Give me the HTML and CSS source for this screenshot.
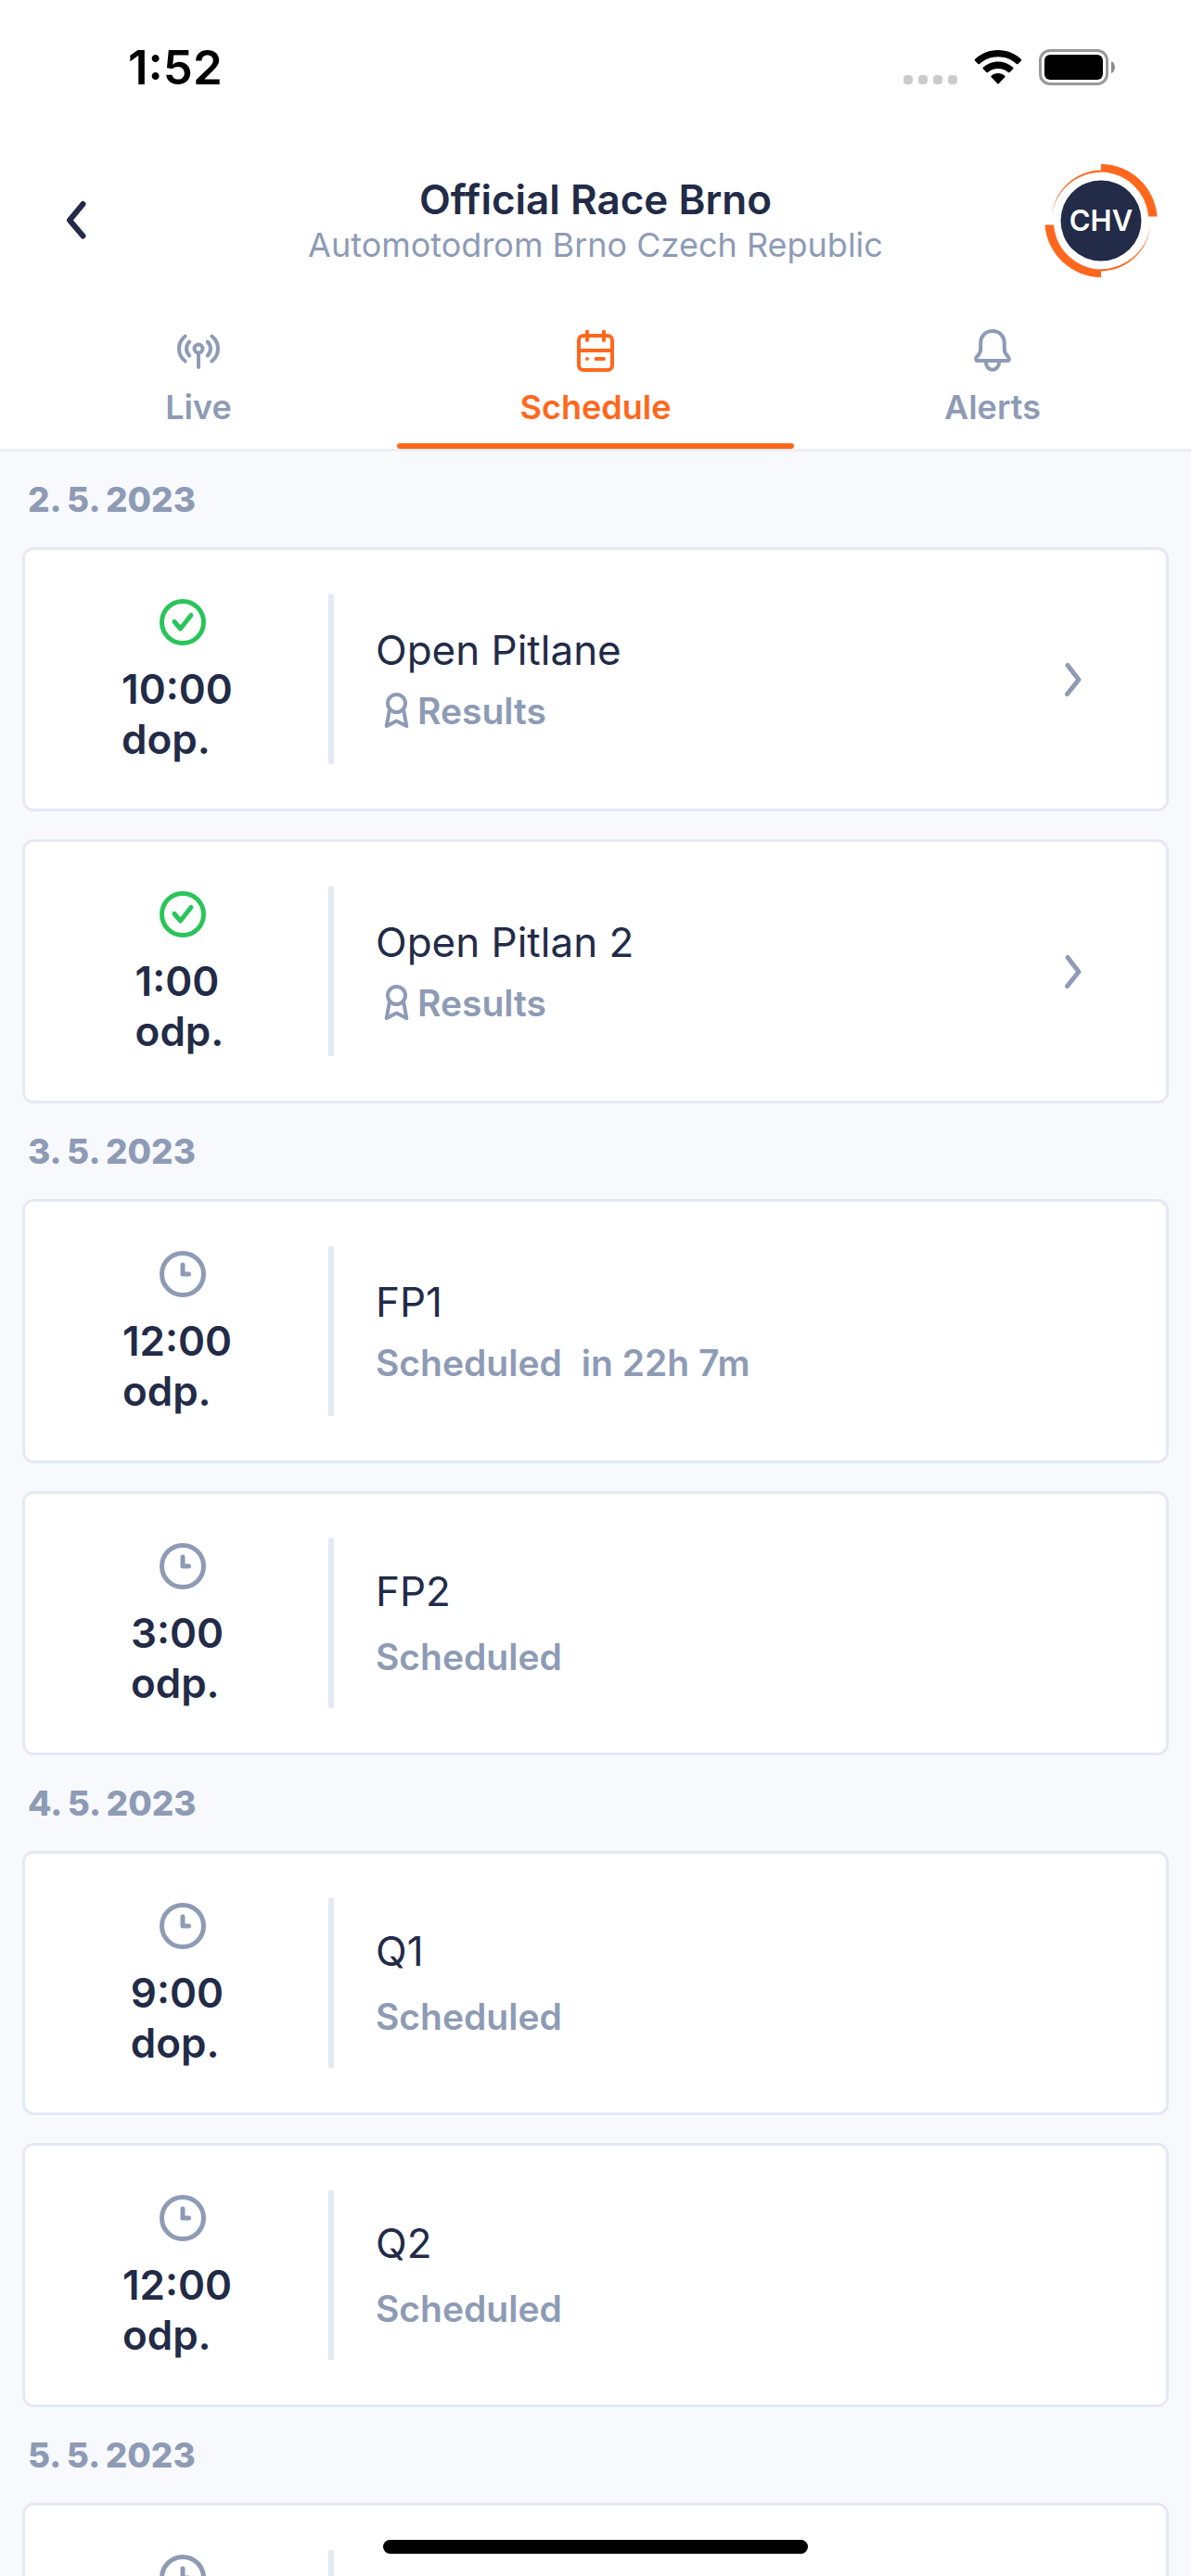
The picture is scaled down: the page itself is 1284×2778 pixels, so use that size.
FILE: index.html
```html
<!DOCTYPE html>
<html lang="en">
<head>
  <meta charset="utf-8">
  <meta name="viewport" content="width=device-width, initial-scale=1">
  <title>Official Race Brno</title>
  <link rel="stylesheet" href="styles.css">
</head>
<body>
  <svg class="sprite" aria-hidden="true">
    <symbol id="i-check" viewBox="0 0 60 60">
      <circle cx="30" cy="30" r="22.5"/>
      <path d="M21 29.5 27.5 37 39 22.5"/>
    </symbol>
    <symbol id="i-clock" viewBox="0 0 60 60">
      <circle cx="30" cy="30" r="22.5"/>
      <path d="M30 20V30H36.5"/>
    </symbol>
    <symbol id="i-award" viewBox="0 0 45 48">
      <circle cx="22.5" cy="15.5" r="9.5"/>
      <path d="M15 22 11.7 40 22.5 34.5 33.3 40 30 22"/>
    </symbol>
    <symbol id="i-next" viewBox="0 0 36 48">
      <path d="M12 8.500 24 24 11.500 39.500"/>
    </symbol>
  </svg>

  <div class="app">
    <div class="status">
      <time class="status-time">1:52</time>
      <div class="status-icons">
        <svg width="58" height="40" viewBox="0 0 58 40" fill="#cbcbcb" aria-hidden="true">
          <rect x="0" y="29" width="10" height="10" rx="4"/><rect x="16" y="29" width="10" height="10" rx="4"/><rect x="32" y="29" width="10" height="10" rx="4"/><rect x="48" y="29" width="10" height="10" rx="4"/>
        </svg>
        <svg width="52" height="40" viewBox="0 0 52 40" fill="#000" aria-hidden="true">
          <path d="M26 2C36 2 45 6 51 12Q51.500 12.700 51 13.400L47.500 17Q46.800 17.500 46 17C40.500 12 33.500 9.300 26 9.300S11.500 12 6 17Q5.200 17.500 4.500 17L1 13.400Q.5 12.700 1 12C7 6 16 2 26 2Z"/>
          <path d="M26 14.500C32.500 14.500 38 17 42.200 20.800Q42.800 21.500 42.200 22.200L38.500 26Q37.700 26.600 37 26C34 23.400 30.200 21.900 26 21.900S18 23.400 15 26Q14.300 26.600 13.500 26L9.800 22.200Q9.200 21.500 9.800 20.800C14 17 19.500 14.500 26 14.500Z"/>
          <path d="M26 27C28.800 27 31.300 28 33.300 29.800Q34 30.500 33.300 31.300L26.700 38.200Q26 38.900 25.300 38.200L18.700 31.300Q18 30.500 18.700 29.800C20.700 28 23.200 27 26 27Z"/>
        </svg>
        <svg width="83" height="40" viewBox="0 0 83 40" aria-hidden="true">
          <rect x="1.500" y="2.500" width="72" height="36" rx="10.500" fill="none" stroke="#999" stroke-width="3"/>
          <rect x="6" y="7" width="63" height="27" rx="6" fill="#000"/>
          <path d="M78 14C83.300 16 83.300 25 78 27Z" fill="#8c8c8c"/>
        </svg>
      </div>
    </div>

    <header class="header">
      <button class="back" type="button" aria-label="Back">
        <svg width="36" height="54" viewBox="0 0 36 54"><path d="M25.500 9 11 26.500 25.500 43.500"/></svg>
      </button>
      <div class="heading">
        <h1>Official Race Brno</h1>
        <p>Automotodrom Brno Czech Republic</p>
      </div>
      <svg class="logo" width="122" height="122" viewBox="-61 -61 122 122" role="img" aria-label="CHV">
        <g id="swoosh" fill="#ff671d">
          <path d="M0-61A61 61 0 0 1 60.600-4.500H51A52 52 0 0 0 0-52.500Z"/>
          <path d="M0-54.500A54 54 0 0 0-53.200-4.500A54 53 0 0 1 0-52.200Z"/>
        </g>
        <use href="#swoosh" transform="rotate(180)"/>
        <circle r="43.500" fill="#222b47"/>
        <text class="logo-text" x="0" y="11" text-anchor="middle">CHV</text>
      </svg>
    </header>

    <nav class="tabs">
      <a class="tab" href="#live">
        <svg class="tab-icon" viewBox="0 0 54 54"><circle cx="27" cy="25" r="4.500"/><path d="M27 30V45M12.700 11.500A17 17 0 0 0 12.700 38.500M17.200 17.500A10.500 10.500 0 0 0 17.200 32.500M41.300 11.500A17 17 0 0 1 41.300 38.500M36.800 17.500A10.500 10.500 0 0 1 36.800 32.500"/></svg>
        <span>Live</span>
      </a>
      <a class="tab tab-active" href="#schedule" aria-current="page">
        <svg class="tab-icon" viewBox="0 0 54 54"><rect x="9" y="11" width="36" height="37" rx="5"/><path d="M9 27H45M18 6.500V16M36 6.500V16M18 36V36.010M27.500 36H36"/></svg>
        <span>Schedule</span>
      </a>
      <a class="tab" href="#alerts">
        <svg class="tab-icon" viewBox="0 0 54 54"><path d="M27 6C19 6 14.200 12 14.200 19V26C14.200 29 13 30.800 10.500 33.200C8 36 9 38 11 38H43C45 38 46 36 43.500 33.200C41 30.800 39.800 29 39.800 26V19C39.800 12 35 6 27 6ZM19.800 39C19.800 44 23 47.800 27 47.800S34.200 44 34.200 39"/></svg>
        <span>Alerts</span>
      </a>
    </nav>

    <main class="list">
      <section>
        <h2>2.&#8201;5.&#8201;2023</h2>
        <a class="card" href="#open-pitlane">
          <div class="when"><svg class="state done"><use href="#i-check"/></svg><p class="time">10:00&nbsp;<br>dop.</p></div>
          <div class="what"><h3>Open Pitlane</h3><p class="note"><svg class="award"><use href="#i-award"/></svg>Results</p></div>
          <svg class="next"><use href="#i-next"/></svg>
        </a>
        <a class="card" href="#open-pitlan-2">
          <div class="when"><svg class="state done"><use href="#i-check"/></svg><p class="time">1:00&nbsp;<br>odp.</p></div>
          <div class="what"><h3>Open Pitlan 2</h3><p class="note"><svg class="award"><use href="#i-award"/></svg>Results</p></div>
          <svg class="next"><use href="#i-next"/></svg>
        </a>
      </section>
      <section>
        <h2>3.&#8201;5.&#8201;2023</h2>
        <article class="card">
          <div class="when"><svg class="state"><use href="#i-clock"/></svg><p class="time">12:00&nbsp;<br>odp.</p></div>
          <div class="what"><h3>FP1</h3><p class="note">Scheduled<span class="countdown">in 22h 7m</span></p></div>
        </article>
        <article class="card">
          <div class="when"><svg class="state"><use href="#i-clock"/></svg><p class="time">3:00&nbsp;<br>odp.</p></div>
          <div class="what what-plain"><h3>FP2</h3><p class="note">Scheduled</p></div>
        </article>
      </section>
      <section>
        <h2>4.&#8201;5.&#8201;2023</h2>
        <article class="card">
          <div class="when"><svg class="state"><use href="#i-clock"/></svg><p class="time">9:00&nbsp;<br>dop.</p></div>
          <div class="what what-plain"><h3>Q1</h3><p class="note">Scheduled</p></div>
        </article>
        <article class="card">
          <div class="when"><svg class="state"><use href="#i-clock"/></svg><p class="time">12:00&nbsp;<br>odp.</p></div>
          <div class="what what-plain"><h3>Q2</h3><p class="note">Scheduled</p></div>
        </article>
      </section>
      <section>
        <h2>5.&#8201;5.&#8201;2023</h2>
        <article class="card">
          <div class="when"><svg class="state"><use href="#i-clock"/></svg></div>
        </article>
      </section>
    </main>
    <div class="home-bar"></div>
  </div>
</body>
</html>
```
FILE: styles.css
```css
:root {
  --navy: #222b47;
  --muted: #8e9bb5;
  --orange: #ff671d;
  --green: #2ac55a;
  --line: #e4e9f3;
  --page: #f8f9fd;
}

* {
  box-sizing: border-box;
  margin: 0;
  padding: 0;
}

body {
  font-family: Inter, "Liberation Sans", sans-serif;
  color: var(--navy);
  background: #fff;
}

a {
  color: inherit;
  text-decoration: none;
}

svg {
  display: block;
  flex: none;
}

.sprite {
  position: absolute;
  width: 0;
  height: 0;
}

.app {
  display: flex;
  flex-direction: column;
  height: 100vh;
}

/* Status bar */
.status {
  display: flex;
  justify-content: space-between;
  align-items: center;
  height: 144px;
  padding: 0 81px 0 138px;
  color: #000;
}

.status-time {
  padding-top: 2px;
  font-size: 51px;
  font-weight: 600;
  line-height: 60px;
}

.status-icons {
  display: flex;
  gap: 18px;
}

/* Header */
.header {
  display: grid;
  grid-template-columns: 122px 1fr 122px;
  align-items: center;
  padding: 33px 36px 0 64px;
}

.back {
  width: 36px;
  border: 0;
  background: none;
}

.back path,
.tab-icon,
.state,
.award,
.next {
  fill: none;
  stroke: currentColor;
  stroke-linecap: round;
  stroke-linejoin: round;
}

.back path {
  stroke: var(--navy);
  stroke-width: 6;
}

.heading {
  margin-right: 28px;
  padding-bottom: 2px;
  text-align: center;
  white-space: nowrap;
}

.logo {
  justify-self: end;
}

h1 {
  font-size: 44px;
  font-weight: 600;
  line-height: 54px;
}

.heading p {
  font-size: 36px;
  line-height: 44px;
  color: var(--muted);
}

.logo-text {
  fill: #fff;
  font-size: 31px;
  font-weight: 600;
}

/* Tabs */
.tabs {
  display: grid;
  grid-template-columns: repeat(3, 1fr);
  border-bottom: 3px solid #eceff7;
}

.tab {
  display: flex;
  flex-direction: column;
  align-items: center;
  padding-top: 52px;
  font-size: 36px;
  font-weight: 600;
  line-height: 44px;
  color: var(--muted);
}

.tab-icon {
  width: 54px;
  height: 54px;
  margin-bottom: 12px;
  stroke-width: 4;
}

.tab::after {
  content: "";
  align-self: stretch;
  height: 6px;
  margin-top: 17px;
  border-radius: 3px;
}

.tab-active {
  color: var(--orange);
}

.tab-active::after {
  background: var(--orange);
}

/* Schedule */
.list {
  flex: 1;
  min-height: 0;
  padding: 0 24px;
  overflow-y: auto;
  scrollbar-width: none;
  background: var(--page);
}

h2 {
  padding: 30px 6px 29px;
  font-size: 37px;
  font-weight: 800;
  line-height: 44px;
  color: var(--muted);
}

.card {
  display: flex;
  align-items: center;
  min-height: 285px;
  padding: 48px 82px 48px 12px;
  border: 3px solid var(--line);
  border-radius: 12px;
  background: #fff;
}

.card + .card {
  margin-top: 30px;
}

.when {
  display: flex;
  flex-direction: column;
  align-items: center;
  gap: 15px;
  width: 321px;
  min-height: 183px;
  border-right: 6px solid var(--line);
}

.state {
  width: 60px;
  height: 60px;
  color: var(--muted);
  stroke-width: 5;
}

.done {
  color: var(--green);
}

.time {
  font-size: 44px;
  font-weight: 600;
  line-height: 54px;
}

.what {
  display: flex;
  flex: 1;
  flex-direction: column;
  gap: 15px;
  padding-left: 45px;
}

.what-plain {
  gap: 20px;
  padding-bottom: 2px;
}

h3 {
  font-size: 44px;
  font-weight: 400;
  line-height: 54px;
}

.note {
  display: flex;
  font-size: 39px;
  font-weight: 600;
  line-height: 48px;
  color: var(--muted);
}

.award {
  width: 45px;
  height: 48px;
  stroke-width: 4;
}

.countdown {
  margin-left: 21px;
}

.next {
  width: 36px;
  height: 48px;
  color: var(--muted);
  stroke-width: 5;
}

.home-bar {
  position: fixed;
  right: 0;
  bottom: 24px;
  left: 0;
  width: 458px;
  height: 15px;
  margin: 0 auto;
  border-radius: 8px;
  background: #000;
}
```
